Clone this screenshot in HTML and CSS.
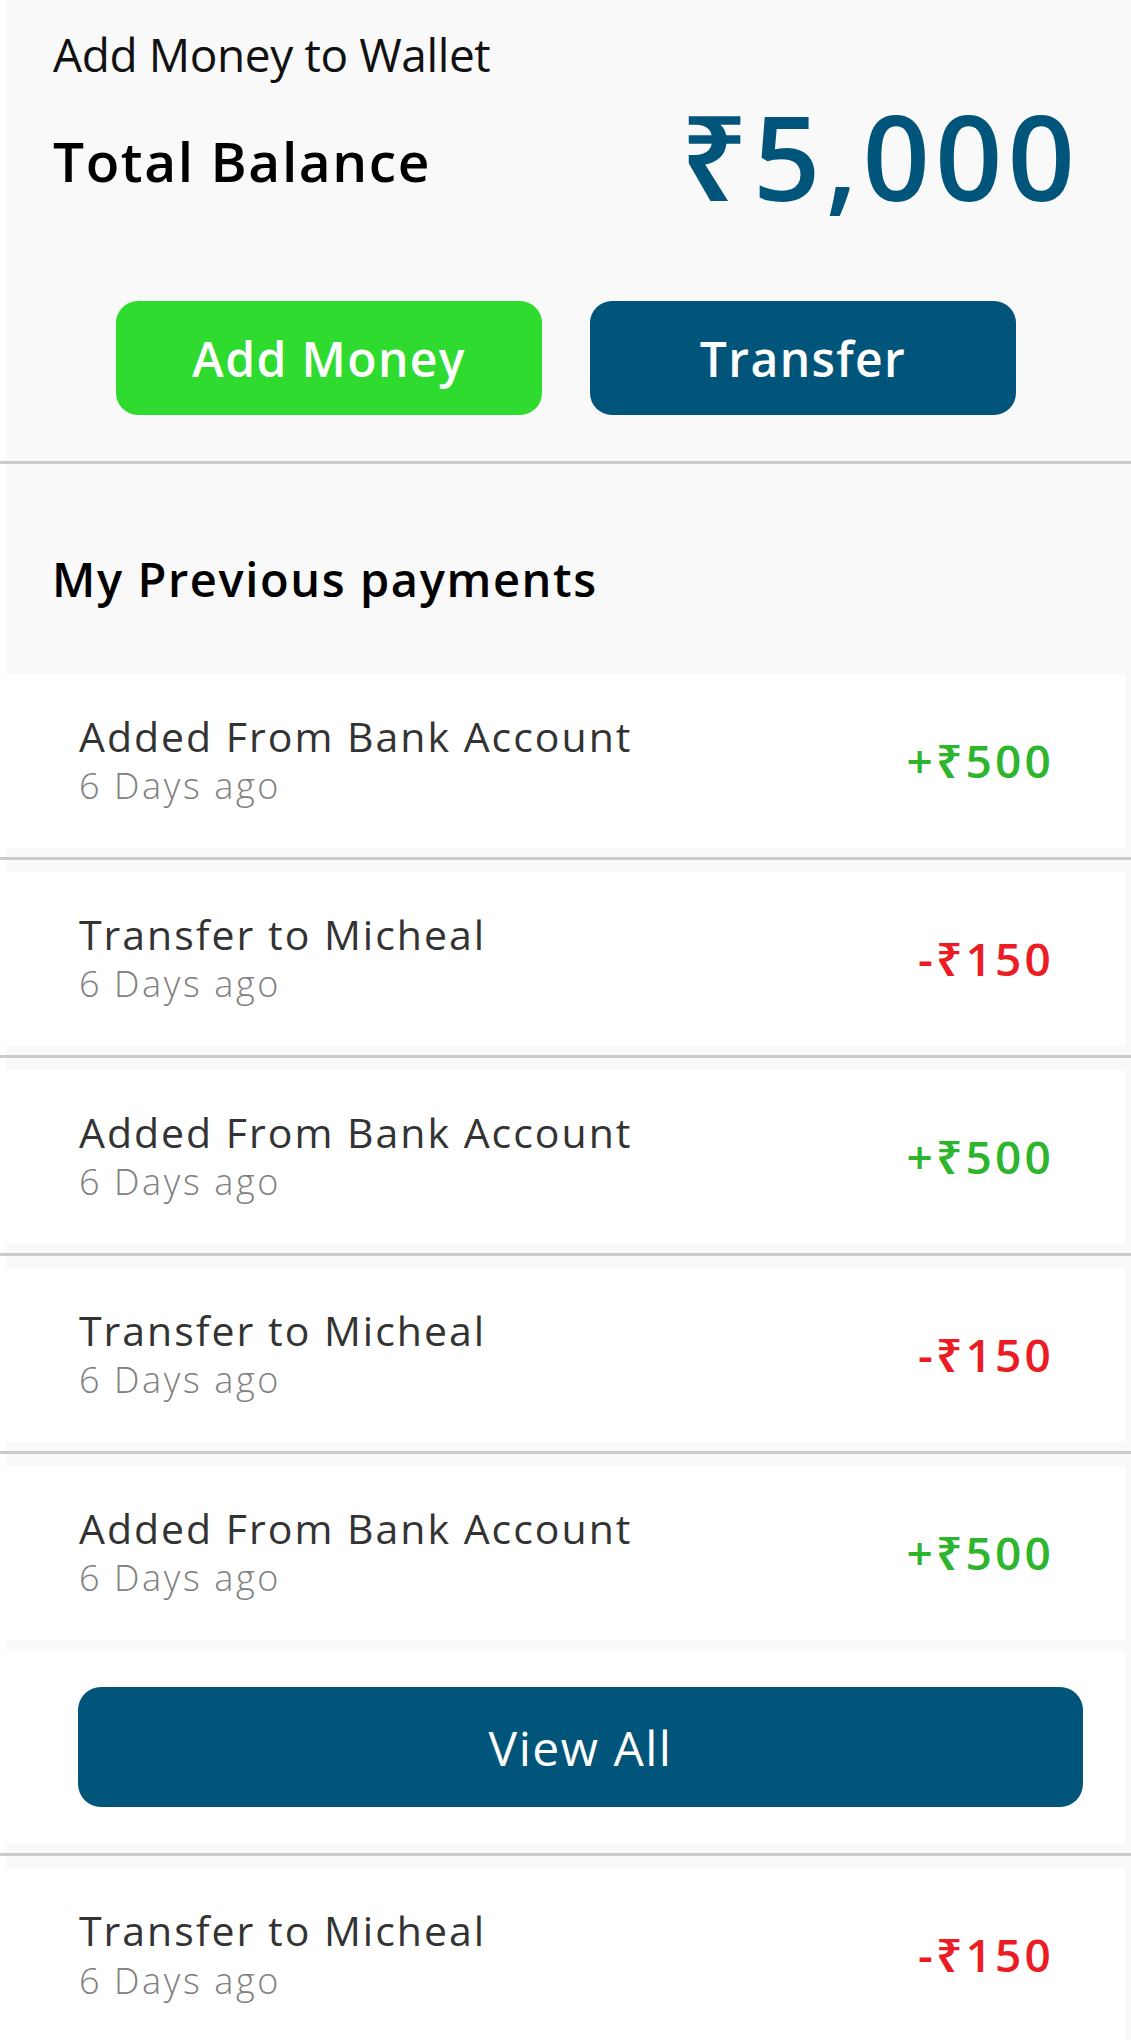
FILE: index.html
```html
<!DOCTYPE html>
<html lang="en">
<head>
<meta charset="utf-8">
<title>Wallet</title>
<link rel="stylesheet" href="styles.css">
</head>
<body>
<div class="screen">
  <section class="wallet">
    <h1 class="wallet-title">Add Money to Wallet</h1>
    <div class="balance-row">
      <span class="balance-label">Total Balance</span>
      <span class="balance-amount">₹5,000</span>
    </div>
    <div class="actions">
      <button class="btn btn-green">Add Money</button>
      <button class="btn btn-blue">Transfer</button>
    </div>
  </section>
  <div class="divider"></div>
  <section class="history-head">
    <h2 class="history-title">My Previous payments</h2>
  </section>

  <div class="slot slot-first">
    <div class="card txn">
      <div class="txn-text">
        <div class="txn-name">Added From Bank Account</div>
        <div class="txn-time">6 Days ago</div>
      </div>
      <div class="txn-amount credit">+₹500</div>
    </div>
  </div>
  <div class="divider"></div>
  <div class="slot">
    <div class="card txn">
      <div class="txn-text">
        <div class="txn-name">Transfer to Micheal</div>
        <div class="txn-time">6 Days ago</div>
      </div>
      <div class="txn-amount debit">-₹150</div>
    </div>
  </div>
  <div class="divider"></div>
  <div class="slot">
    <div class="card txn">
      <div class="txn-text">
        <div class="txn-name">Added From Bank Account</div>
        <div class="txn-time">6 Days ago</div>
      </div>
      <div class="txn-amount credit">+₹500</div>
    </div>
  </div>
  <div class="divider"></div>
  <div class="slot">
    <div class="card txn">
      <div class="txn-text">
        <div class="txn-name">Transfer to Micheal</div>
        <div class="txn-time">6 Days ago</div>
      </div>
      <div class="txn-amount debit">-₹150</div>
    </div>
  </div>
  <div class="divider"></div>
  <div class="slot slot-open">
    <div class="card txn">
      <div class="txn-text">
        <div class="txn-name">Added From Bank Account</div>
        <div class="txn-time">6 Days ago</div>
      </div>
      <div class="txn-amount credit">+₹500</div>
    </div>
  </div>
  <div class="slot slot-view">
    <div class="card view-card">
      <button class="btn-view">View All</button>
    </div>
  </div>
  <div class="divider"></div>
  <div class="slot">
    <div class="card txn">
      <div class="txn-text">
        <div class="txn-name">Transfer to Micheal</div>
        <div class="txn-time">6 Days ago</div>
      </div>
      <div class="txn-amount debit">-₹150</div>
    </div>
  </div>
</div>
</body>
</html>
```
FILE: styles.css
```css
* { box-sizing: border-box; }
html, body { margin: 0; padding: 0; background: #ffffff; }
body {
  font-family: "Open Sans", "Noto Sans", sans-serif;
  color: #111;
  overflow: hidden;
}
.screen { width: 1131px; }

.wallet {
  margin-left: 6px;
  background: #f9f9f9;
  padding: 27px 0 46px 47px;
}
.wallet-title {
  margin: 0;
  font-size: 46px;
  font-weight: 400;
  line-height: 1.2;
  letter-spacing: -0.4px;
  color: #111;
}
.balance-row {
  display: flex;
  align-items: center;
  justify-content: space-between;
  margin-top: 15px;
  padding-right: 51px;
}
.balance-label {
  font-size: 55px;
  font-weight: 600;
  line-height: 1.2;
  letter-spacing: 1.6px;
  color: #000;
  margin-top: 9px;
}
.balance-amount {
  font-size: 118px;
  font-weight: 600;
  line-height: 1;
  letter-spacing: 5px;
  color: #02557a;
}
.actions {
  display: flex;
  gap: 48px;
  margin-top: 86px;
  padding-left: 63px;
}
.btn {
  width: 426px;
  height: 114px;
  border: 0;
  border-radius: 22px;
  color: #fff;
  font-family: "Open Sans", "Noto Sans", sans-serif;
  font-size: 48px;
  font-weight: 600;
  letter-spacing: 1.4px;
  padding: 0;
}
.btn-green { background: #2edb2e; }
.btn-blue { background: #02557a; }

.divider {
  height: 3px;
  background: #cbcbcb;
}

.history-head {
  margin-left: 6px;
  background: #f9f9f9;
  padding: 87px 0 66px 46px;
}
.history-title {
  margin: 0;
  font-size: 47px;
  font-weight: 600;
  line-height: 1.2;
  letter-spacing: 1.6px;
  color: #000;
}

.slot {
  margin-left: 6px;
  background: #f9f9f9;
  padding: 12px 0 9px 0;
}
.slot-first { padding-top: 0; }
.slot-open { padding-bottom: 0; }
.slot-view { padding-top: 11.5px; padding-bottom: 9.5px; }
.card {
  background: #fff;
  margin-left: -6px;
  margin-right: 6px;
}
.txn {
  height: 174px;
  display: flex;
  align-items: center;
  justify-content: space-between;
  padding: 0 71px 0 79px;
}
.txn-text {
  display: flex;
  flex-direction: column;
  margin-top: -2px;
}
.txn-name {
  font-size: 41px;
  font-weight: 400;
  line-height: 1.2;
  letter-spacing: 2px;
  color: #333;
}
.txn-time {
  margin-top: 3px;
  font-size: 36px;
  font-weight: 300;
  line-height: 1.2;
  letter-spacing: 2.6px;
  color: #808080;
}
.txn-amount {
  font-size: 46px;
  font-weight: 600;
  line-height: 1.2;
  letter-spacing: 3.2px;
}
.credit { color: #2db52d; }
.debit { color: #ec1c24; }

.view-card {
  padding: 36px 42px 36.5px 78px;
}
.btn-view {
  display: block;
  width: 100%;
  height: 120px;
  border: 0;
  border-radius: 23px;
  background: #02557a;
  color: #fff;
  font-family: "Open Sans", "Noto Sans", sans-serif;
  font-size: 48px;
  font-weight: 400;
  letter-spacing: 1.5px;
  padding: 0;
}
```
